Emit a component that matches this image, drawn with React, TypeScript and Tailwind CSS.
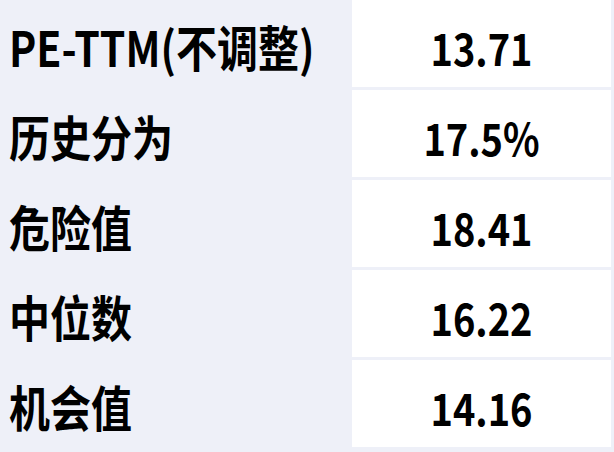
const rows = [
  { label: "PE-TTM(不调整)", value: "13.71" },
  { label: "历史分为", value: "17.5%" },
  { label: "危险值", value: "18.41" },
  { label: "中位数", value: "16.22" },
  { label: "机会值", value: "14.16" },
];

export default function App() {
  return (
    <div
      className="h-[452px] w-[614px] overflow-hidden bg-[#eef0f8] pr-[3px] text-black"
      style={{ fontFamily: '"Noto Sans CJK SC", "Noto Sans", sans-serif' }}
    >
      <div className="grid grid-cols-[352px_1fr] gap-y-[3px]">
        {rows.map((row) => (
          <div key={row.label} className="contents">
            <div className="flex h-[87px] items-center pl-[9px] pt-[6px] text-[41px] font-bold">
              <span className="inline-block scale-y-[1.18]">{row.label}</span>
            </div>
            <div className="flex h-[87px] items-center justify-center bg-white pt-[6px] text-[38px] font-bold">
              <span className="inline-block scale-y-[1.18]">{row.value}</span>
            </div>
          </div>
        ))}
      </div>
    </div>
  );
}
